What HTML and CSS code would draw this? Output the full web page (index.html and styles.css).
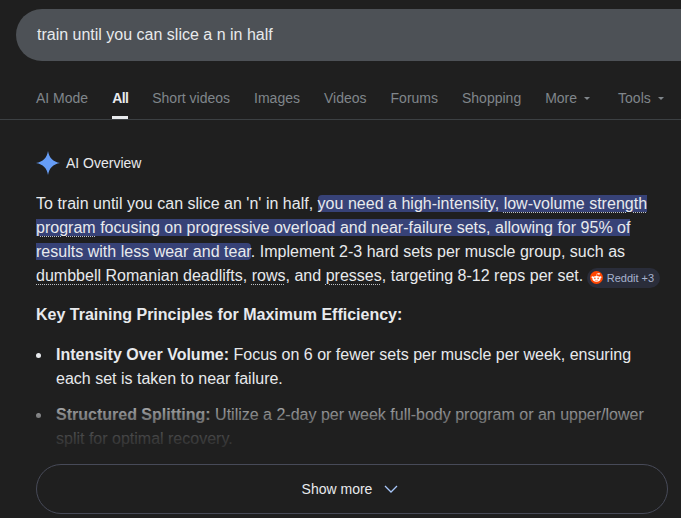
FILE: index.html
```html
<!DOCTYPE html>
<html lang="en">
<head>
<meta charset="utf-8">
<title>train until you can slice a n in half</title>
<link rel="stylesheet" href="styles.css">
</head>
<body>
<header class="search-bar"><span class="query">train until you can slice a n in half</span></header>
<nav class="tabs">
  <a class="tab">AI Mode</a>
  <a class="tab active">All</a>
  <a class="tab">Short videos</a>
  <a class="tab">Images</a>
  <a class="tab">Videos</a>
  <a class="tab">Forums</a>
  <a class="tab">Shopping</a>
  <a class="tab has-caret">More<i class="caret"></i></a>
  <a class="tab has-caret tools">Tools<i class="caret"></i></a>
</nav>
<main class="overview">
  <div class="ov-head">
    <svg class="spark" width="24" height="24" viewBox="0 0 24 24"><path d="M12 0C13 6.5 17 11 24 12C17 13 13 17.5 12 24C11 17.5 7 13 0 12C7 11 11 6.5 12 0Z" fill="#669df6"/></svg>
    <span class="ov-title">AI Overview</span>
  </div>
  <div class="clamp">
    <p class="para">To train until you can slice an 'n' in half, <mark class="hl">you need a high-intensity, <span class="dot-u">low-volume strength program</span> focusing on progressive overload and near-failure sets, allowing for 95% of results with less wear and tear</mark>. Implement 2-3 hard sets per muscle group, such as <span class="dot-u">dumbbell Romanian deadlifts</span>, <span class="dot-u">rows</span>, and <span class="dot-u">presses</span>, targeting 8-12 reps per set. <span class="chip"><svg width="13" height="13" viewBox="0 0 24 24"><circle cx="12" cy="12" r="12" fill="#ff4500"/><ellipse cx="12" cy="14.5" rx="7.5" ry="5.2" fill="#fff"/><circle cx="4.6" cy="11.6" r="1.8" fill="#fff"/><circle cx="19.4" cy="11.6" r="1.8" fill="#fff"/><circle cx="16.6" cy="5.2" r="1.6" fill="#fff"/><path d="M12 9.5L13 4.8L16.6 5.2" fill="none" stroke="#fff" stroke-width="1"/><circle cx="9" cy="13.6" r="1.4" fill="#ff4500"/><circle cx="15" cy="13.6" r="1.4" fill="#ff4500"/><path d="M9 16.8Q12 18.6 15 16.8" fill="none" stroke="#ff4500" stroke-width="1"/></svg><span>Reddit +3</span></span></p>
    <h2 class="sub">Key Training Principles for Maximum Efficiency:</h2>
    <ul class="points">
      <li class="point"><div><b>Intensity Over Volume:</b> Focus on 6 or fewer sets per muscle per week, ensuring each set is taken to near failure.</div></li>
      <li class="point"><div><b>Structured Splitting:</b> Utilize a 2-day per week full-body program or an upper/lower split for optimal recovery.</div></li>
    </ul>
    <div class="fade"></div>
  </div>
  <button class="more">Show more<svg width="14" height="8" viewBox="0 0 14 8"><path d="M1 1L7 7L13 1" fill="none" stroke="#a8c7fa" stroke-width="1.3"/></svg></button>
</main>
</body>
</html>
```
FILE: styles.css
```css
* { box-sizing: border-box; }
html, body { margin: 0; height: 518px; overflow: hidden; }
body { background: #1f1f1f; color: #e8eaed; font-family: "Liberation Sans", Arial, sans-serif; font-size: 16px; }

.search-bar { margin: 9px 0 0 16px; height: 52px; background: #4d5156; border-radius: 26px 0 0 26px; display: flex; align-items: center; padding-left: 21px; }
.query { font-size: 16px; color: #e8eaed; }

.tabs { display: flex; gap: 24px; height: 59px; padding: 27px 0 0 36px; border-bottom: 1px solid #3c4043; font-size: 14px; line-height: 20px; white-space: nowrap; }
.tab { color: #80868b; height: 31px; }
.tab.active { color: #e8eaed; font-weight: 700; letter-spacing: -.6px; border-bottom: 3px solid #e8eaed; }
.has-caret { display: flex; align-items: flex-start; }
.caret { width: 0; height: 0; margin: 9px 0 0 7px; border: 3px solid transparent; border-top: 3px solid #80868b; border-bottom: 0; }
.tools { margin-left: 4px; }

.overview { padding: 0 13px 0 36px; }
.ov-head { display: flex; align-items: center; gap: 6px; height: 24px; margin-top: 31px; }
.spark { flex: none; }
.ov-title { font-size: 14px; line-height: 20px; color: #e8eaed; }

.clamp { position: relative; height: 273px; margin-top: 16px; padding-top: 1px; overflow: hidden; }
.para { margin: 0; line-height: 24px; letter-spacing: .015px; }
.hl { background: #374277; color: #e8eaed; border-radius: 4px; }
.dot-u { text-decoration: underline dotted #bdc1c6 1px; text-underline-offset: 3px; }
.chip { display: inline-flex; align-items: center; gap: 4px; height: 20px; margin-left: -1px; padding: 0 6px 0 3px; border-radius: 10px; background: #2a2d3a; color: #a8b3cf; font-size: 11px; letter-spacing: 0; vertical-align: -3px; line-height: 20px; white-space: nowrap; }
.sub { margin: 15px 0 0; font-size: 16px; line-height: 24px; font-weight: 700; color: #e8eaed; }
.points { list-style: none; margin: 16px 0 0; padding: 0 10px 0 0; }
.point { display: grid; grid-template-columns: 20px 1fr; line-height: 24px; margin-bottom: 12px; }
.point::before { content: ""; width: 5px; height: 5px; margin: 10px 0 0 0; border-radius: 50%; background: #e8eaed; }
.point b { font-weight: 700; }
.fade { position: absolute; left: 0; right: 0; bottom: 0; height: 70px; background: linear-gradient(to bottom, rgba(31,31,31,0) 0%, rgba(31,31,31,.5) 30%, rgba(31,31,31,.85) 64%, rgba(31,31,31,.92) 78%, rgba(31,31,31,1) 90%); }

.more { display: flex; align-items: center; justify-content: center; gap: 12px; width: 632px; height: 50px; margin-top: 0; padding: 0 4px 0 0; background: transparent; border: 1px solid #474a58; border-radius: 25px; color: #e8eaed; font: 14px "Liberation Sans", Arial, sans-serif; }
```
